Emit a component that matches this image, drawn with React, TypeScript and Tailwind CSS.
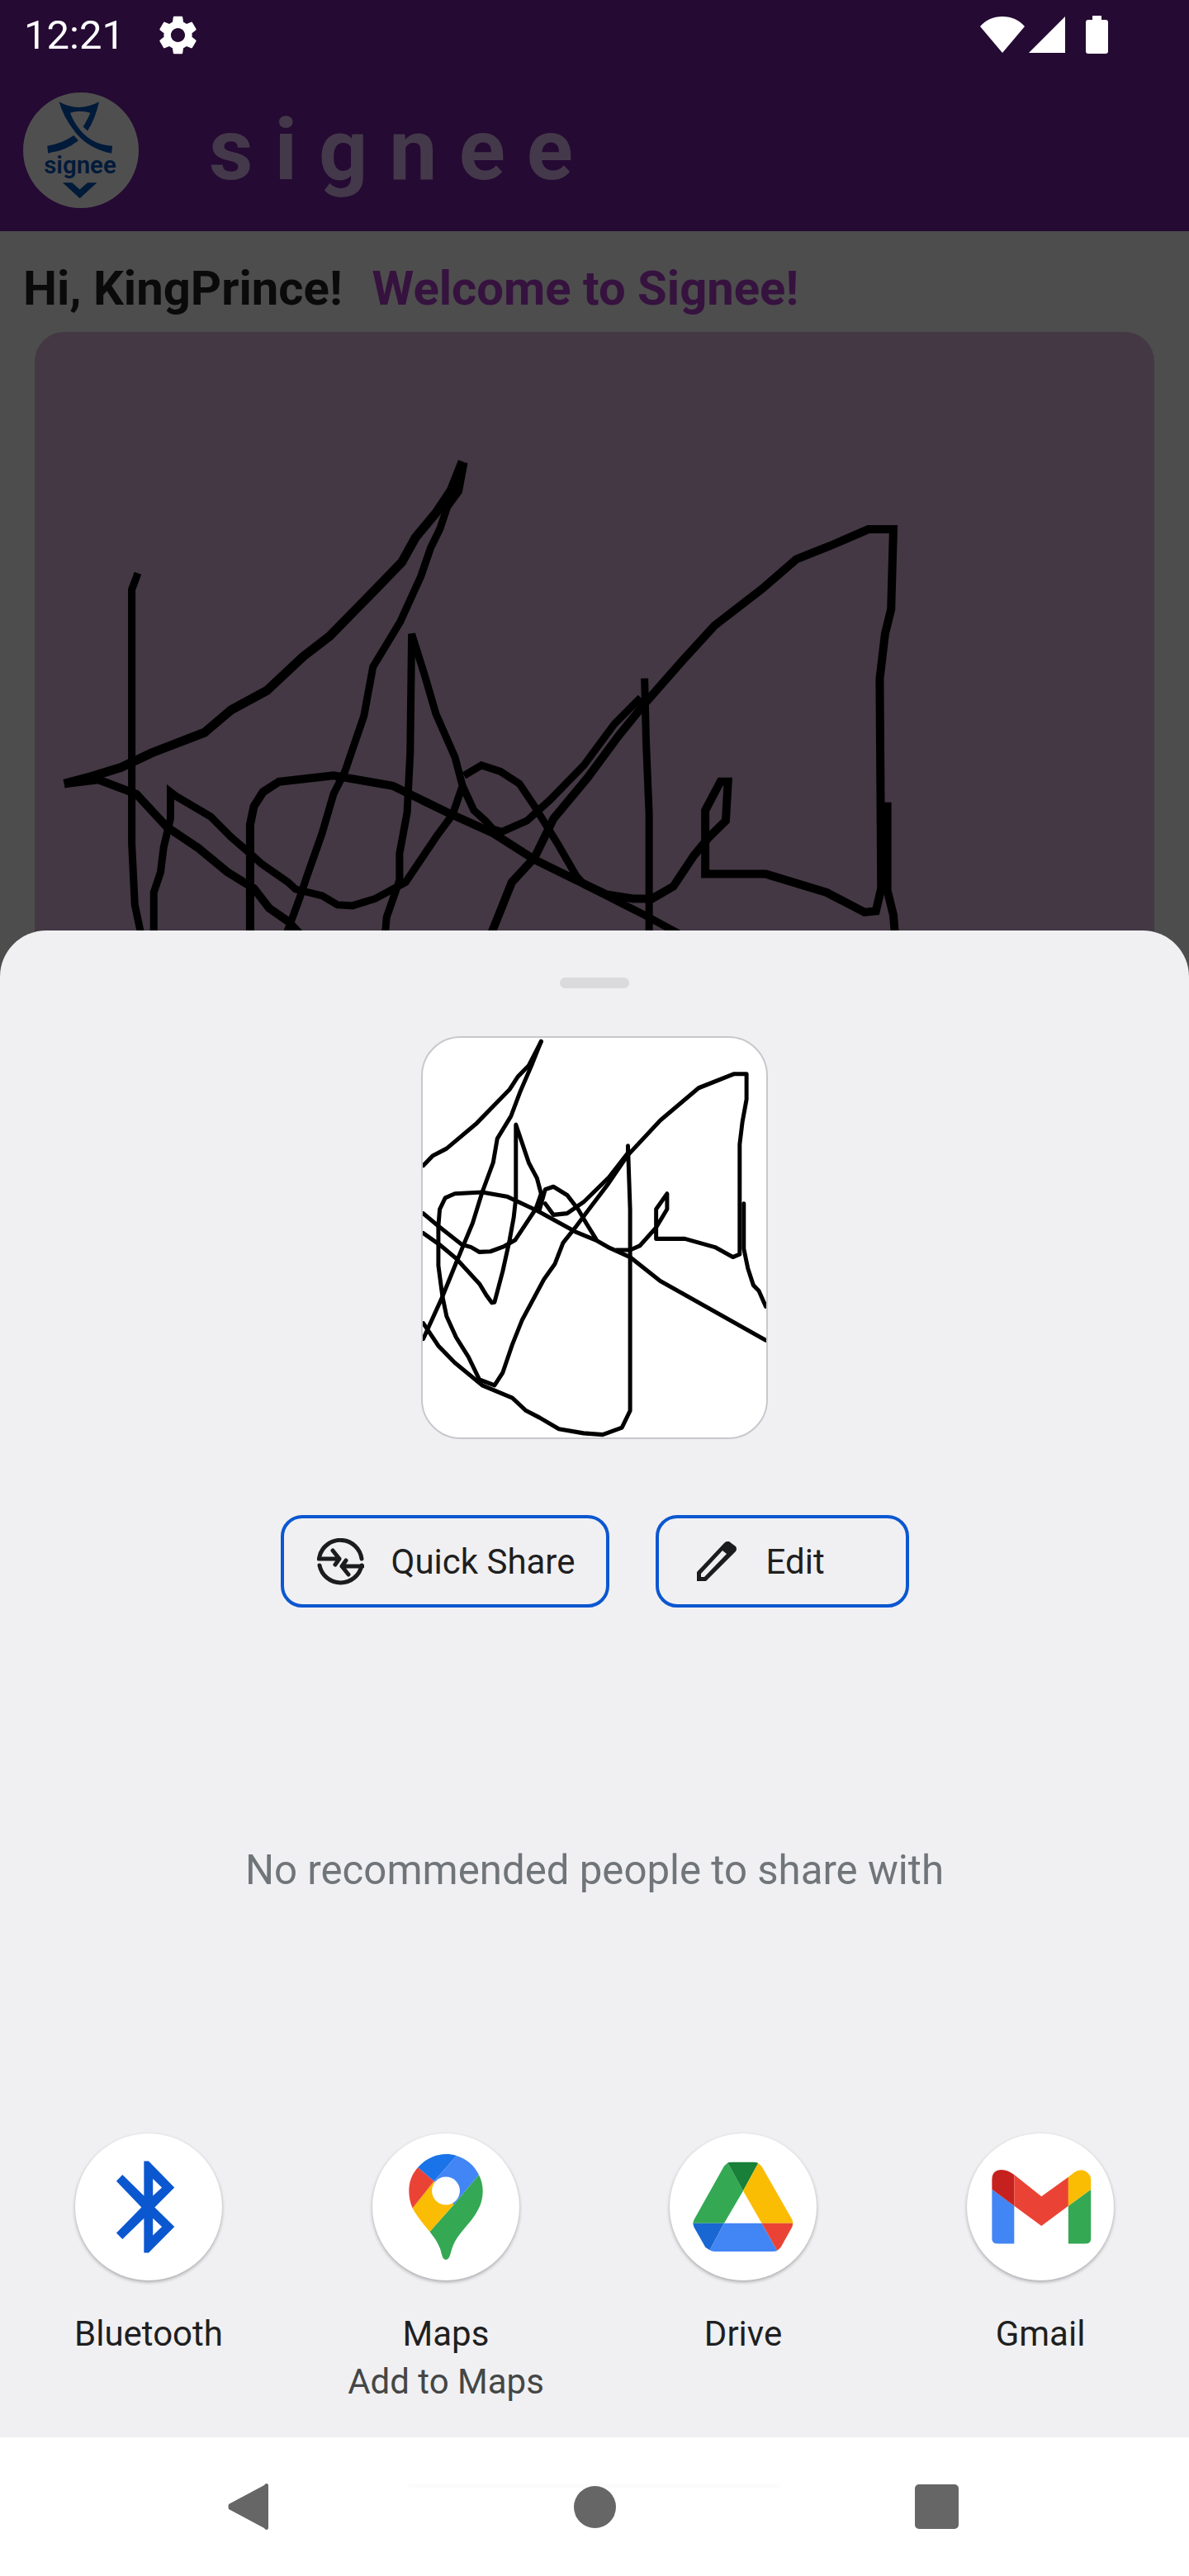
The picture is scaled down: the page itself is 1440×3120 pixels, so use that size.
import React from 'react';

const canvasStrokes = [
  { w: 9, d: 'M182 592 174 632V1250L178 1400 186 1470' },
  { w: 11, d: 'M85 1105 120 1088 160 1065 200 1030 270 980 305 925 352 878 400 795 435 745 495 632 530 565 548 505 575 445 595 390 610 320' },
  { w: 9, d: 'M612 322 605 392 590 430 580 485 568 530 555 600 528 710 492 820 480 940 455 1075 440 1130 425 1225 405 1330 395 1385 378 1470' },
  { w: 10, d: 'M85 1105 130 1095 180 1130 220 1210 262 1262 300 1320 335 1360 355 1408 380 1440 395 1470' },
  { w: 9, d: 'M203 1470V1370L212 1320 216 1260 225 1190V1125L232 1135 278 1185 305 1235 330 1275 345 1300 380 1345 390 1362 425 1378 445 1400 465 1402 495 1385 535 1345 575 1235 597 1180 610 1110 600 1040 575 935 560 840 543 740 541 1030 537 1175 527 1275V1340L510 1430 508 1470' },
  { w: 10, d: 'M330 1470V1205L335 1160 347 1125 368 1100 440 1085 518 1110 590 1175 650 1225 705 1290 760 1340 800 1375 835 1385H860L888 1355 915 1280 935 1235 957 1195 960 1100 950 1100 930 1170V1325H1010L1090 1370 1140 1418 1155 1415 1162 1360 1160 850 1167 740 1175 680 1178 485H1145L1095 525 1050 558 1005 630 942 720 900 805 850 910 815 990 775 1090 730 1190 705 1285 675 1345 648 1470' },
  { w: 9, d: 'M610 1110 625 1170 640 1195 650 1215 662 1222 695 1195 725 1145 770 1060 810 960 845 895' },
  { w: 9, d: 'M612 1085 635 1060 660 1075 685 1105 705 1160 735 1250 760 1330 770 1350 800 1378 850 1425 895 1470' },
  { w: 9, d: 'M850 848 852 1000 856 1180V1470' },
  { w: 10, d: 'M1170 1150V1365L1178 1425 1180 1470' },
];

const thumbStrokes = [
  'M95 525 130 490 180 465 290 375 410 255 440 210 480 170 525 85',
  'M525 85 490 170 450 260 415 350 365 430 350 515 310 620 275 730 215 870 165 990 95 1140',
  'M95 695 150 740 235 805 270 815 300 832 340 830 390 812 430 790 505 680 525 625 510 570 480 515 433 380V640L425 710 410 790 385 900 355 1010 345 1012 325 985 300 945 215 855 160 810 95 765',
  'M95 1085 150 1165 210 1225 310 1305 420 1350 470 1395 520 1420 590 1460 680 1475 750 1480 820 1455 850 1395V680L842 455V490',
  'M150 740 155 680 175 640 210 625 310 620 400 635 510 685 650 760 725 790 770 815 850 850 960 935 1345 1145',
  'M150 740V880L165 990 180 1060 215 1135 260 1205 300 1285 355 1305 385 1260 420 1160 455 1075 535 930 575 875 605 800 650 745 700 680 770 590 840 490 960 365 1100 250 1230 200H1275V290L1260 370 1250 450V840L1225 850 1160 815 1050 785H945V680L985 625V680L945 745 885 810 850 825H800',
  'M520 680 540 610 570 600 620 630 660 680 690 730 725 785',
  'M540 660 570 700 620 695 680 655 770 570 842 480',
  'M1265 660V820L1280 890 1300 950 1320 970 1345 1025',
];

const BluetoothIcon = () => (
  <svg viewBox="118 72 410 533" preserveAspectRatio="none" className="w-full h-full">
    <path
      fillRule="evenodd"
      fill="#0b57d0"
      d="M310 172H323L395 268 340 340 395 410 323 505H310V380L250 455 233 433 303 340 233 245 250 222 310 298ZM335 237V298L360 268ZM335 380V442L360 410Z"
    />
  </svg>
);

const MapsIcon = () => (
  <svg viewBox="948 72 410 533" preserveAspectRatio="none" className="w-full h-full">
    <path fill="#34a853" d="M1245 222C1252 240 1256 260 1256 280 1256 320 1245 350 1225 385 1200 425 1180 450 1170 490 1165 510 1163 530 1153 530 1143 530 1142 510 1137 490 1130 465 1120 448 1108 428L1175 330Z" />
    <path fill="#fbbc04" d="M1060 343 1120 245 1175 330 1108 428C1090 400 1072 372 1060 343Z" />
    <path fill="#ea4335" d="M1075 195 1120 245 1060 343C1053 322 1050 300 1050 280 1050 248 1058 220 1075 195Z" />
    <path fill="#1a73e8" d="M1075 195C1095 165 1125 147 1153 147 1164 147 1174 149 1183 153L1120 245Z" />
    <path fill="#4285f4" d="M1183 153C1212 165 1233 190 1245 222L1175 330 1120 245Z" />
    <ellipse cx="1153" cy="280" rx="39" ry="51" fill="#fff" />
  </svg>
);

const DriveIcon = () => (
  <svg viewBox="118 72 410 533" preserveAspectRatio="none" className="w-full h-full">
    <path fill="#34a853" d="M280 178 270 190 186 385 183 398H270L323 280Z" />
    <path fill="#188038" d="M280 178Q284 176 292 176H352Q360 176 365 180L323 280Z" />
    <path fill="#fbbc04" d="M365 180 375 192 460 385 462 398H375L323 280Z" />
    <path fill="#1967d2" d="M183 398H270L230 495 218 485 186 412Z" />
    <path fill="#4285f4" d="M270 398H375L418 497Q414 500 405 500H243Q235 500 230 495Z" />
    <path fill="#ea4335" d="M375 398H462L460 410 428 485 418 497Z" />
  </svg>
);

const GmailIcon = () => (
  <svg viewBox="948 72 410 533" preserveAspectRatio="none" className="w-full h-full">
    <path fill="#4285f4" d="M1018 275 1080 335V472H1035Q1018 472 1018 455Z" />
    <path fill="#34a853" d="M1294 275 1231 335V472H1277Q1294 472 1294 455Z" />
    <path fill="#c5221f" d="M1018 275V240Q1018 204 1045 204 1062 204 1080 222V335Z" />
    <path fill="#ea4335" d="M1080 222 1156 300 1231 230V335L1156 407 1080 335Z" />
    <path fill="#fbbc04" d="M1231 230 1248 213Q1265 198 1280 210 1294 222 1294 240V275L1231 335Z" />
  </svg>
);

const targets = [
  { name: 'Bluetooth', sub: '', icon: <BluetoothIcon /> },
  { name: 'Maps', sub: 'Add to Maps', icon: <MapsIcon /> },
  { name: 'Drive', sub: '', icon: <DriveIcon /> },
  { name: 'Gmail', sub: '', icon: <GmailIcon /> },
];

const StatusBar = () => (
  <div className="h-[84px] flex items-center pl-[29px] pr-[98px] text-white">
    <span className="text-[49px] leading-none font-[Roboto,sans-serif]">12:21</span>
    <svg viewBox="0 0 24 24" className="w-[57px] h-[57px] ml-[36px] fill-white">
      <path d="M19.14,12.94c0.04-0.3,0.06-0.61,0.06-0.94c0-0.32-0.02-0.64-0.07-0.94l2.03-1.58c0.18-0.14,0.23-0.41,0.12-0.61 l-1.92-3.32c-0.12-0.22-0.37-0.29-0.59-0.22l-2.39,0.96c-0.5-0.38-1.03-0.7-1.62-0.94L14.4,2.81c-0.04-0.24-0.24-0.41-0.48-0.41 h-3.84c-0.24,0-0.43,0.17-0.47,0.41L9.25,5.35C8.66,5.59,8.12,5.92,7.63,6.29L5.24,5.33c-0.22-0.08-0.47,0-0.59,0.22L2.74,8.87 C2.62,9.08,2.66,9.34,2.86,9.48l2.03,1.58C4.84,11.36,4.8,11.69,4.8,12s0.02,0.64,0.07,0.94l-2.03,1.58 c-0.18,0.14-0.23,0.41-0.12,0.61l1.92,3.32c0.12,0.22,0.37,0.29,0.59,0.22l2.39-0.96c0.5,0.38,1.03,0.7,1.62,0.94l0.36,2.54 c0.05,0.24,0.24,0.41,0.48,0.41h3.84c0.24,0,0.44-0.17,0.47-0.41l0.36-2.54c0.59-0.24,1.13-0.56,1.62-0.94l2.39,0.96 c0.22,0.08,0.47,0,0.59-0.22l1.92-3.32c0.12-0.22,0.07-0.47-0.12-0.61L19.14,12.94z M12,15.6c-1.98,0-3.6-1.62-3.6-3.6 s1.62-3.6,3.6-3.6s3.6,1.62,3.6,3.6S13.98,15.6,12,15.6z" />
    </svg>
    <div className="ml-auto flex items-center">
      <svg viewBox="0 0 54 44" className="w-[54px] h-[44px] fill-white">
        <path d="M27 44 0 12C7 4 16 0 27 0S47 4 54 12Z" />
      </svg>
      <svg viewBox="0 0 44 44" className="w-[44px] h-[44px] ml-[5px] fill-white">
        <path d="M44 0V44H0Z" />
      </svg>
      <svg viewBox="0 0 27 46" className="w-[27px] h-[46px] ml-[25px] fill-white">
        <path d="M8 0H19V5H24Q27 5 27 8V43Q27 46 24 46H3Q0 46 0 43V8Q0 5 3 5H8Z" />
      </svg>
    </div>
  </div>
);

const Logo = () => (
  <div className="w-[140px] h-[140px] rounded-full bg-[#4f4f4f] shrink-0">
    <svg viewBox="85 66 418 419" className="w-full h-full fill-[#001a3a]">
      <path d="M215 100Q285 140 360 100 345 165 318 205L302 190Q320 160 328 140 290 128 255 140 285 215 345 245 375 258 408 260L405 287 385 282Q310 260 270 205 230 155 215 100Z" />
      <path d="M172 260Q230 250 268 222L285 240Q240 275 190 282L175 287Z" />
      <path d="M228 393H262L290 418 318 393H352L290 450Z" />
      <text x="291" y="359" textAnchor="middle" fontSize="88" fontWeight="600" fontFamily="Roboto, sans-serif">signee</text>
    </svg>
  </div>
);

const App = () => {
  return (
    <div className="relative w-[1440px] h-[3120px] overflow-hidden flex flex-col bg-[#4d4d4d] font-[Roboto,sans-serif]">
      <header className="h-[280px] bg-[#250a33] shrink-0">
        <StatusBar />
        <div className="flex items-center pl-[28px] mt-[28px]">
          <Logo />
          <span className="ml-[85px] text-[104px] leading-none font-bold tracking-[26px] text-[#44394a]">signee</span>
        </div>
      </header>

      <main className="flex-1 min-h-0 px-[42px]">
        <div className="-mx-[42px] pl-[28px] mt-[38px] h-[62px] flex items-center text-[58px] leading-none font-bold whitespace-nowrap">
          <span className="text-[#0a0a0a]">Hi, KingPrince!</span>
          <span className="ml-[36px] text-[#36123f]">Welcome to Signee!</span>
        </div>
        <div className="relative mt-[22px] h-[1100px] bg-[#433843] rounded-[36px] overflow-hidden">
          <svg viewBox="46 4 1476 2213" preserveAspectRatio="none" className="absolute inset-0 w-full h-full fill-none stroke-black">
            {canvasStrokes.map((s, i) => (
              <path key={i} d={s.d} strokeWidth={s.w} vectorEffect="non-scaling-stroke" />
            ))}
          </svg>
        </div>
      </main>

      {/* share sheet sits over the app */}
      <section className="absolute left-0 right-0 top-[1127px] bottom-[168px] bg-[#f0f0f3] rounded-t-[56px] flex flex-col items-center">
        <div className="mt-[57px] w-[84px] h-[13px] rounded-full bg-[#dadadd]" />
        <div className="mt-[58px] w-[420px] h-[488px] rounded-[48px] border-2 border-[#c8c8cc] bg-white overflow-hidden shrink-0">
          <svg viewBox="93 72 1254 1418" preserveAspectRatio="none" className="w-full h-full fill-none stroke-black" strokeLinejoin="round" strokeLinecap="round">
            {thumbStrokes.map((d, i) => (
              <path key={i} d={d} strokeWidth={15} />
            ))}
          </svg>
        </div>

        <div className="mt-[92px] flex gap-[56px]">
          <button className="w-[398px] h-[112px] rounded-[26px] border-4 border-[#0b57d0] flex items-center pl-[40px] text-[42px] text-[#1f1f1f]">
            <svg viewBox="0 0 57 57" className="w-[57px] h-[57px] fill-none stroke-[#1b1c1e] mr-[33px]" strokeWidth="5" strokeLinecap="round" strokeLinejoin="round">
              <path d="M3 22A26 26 0 0 1 54 25" />
              <path d="M54 33A26 26 0 0 1 3 33" />
              <path d="M2 25H27M19 15 27 25 22 32" />
              <path d="M55 34H30M38 44 30 34 35 27" />
            </svg>
            Quick Share
          </button>
          <button className="w-[307px] h-[112px] rounded-[26px] border-4 border-[#0b57d0] flex items-center pl-[46px] text-[42px] text-[#1f1f1f]">
            <svg viewBox="0 0 48 48" className="w-[48px] h-[48px] fill-[#1b1c1e] mr-[36px]">
              <path fillRule="evenodd" d="M0 48V37L33 2Q36-1 39 0L47 6Q49 9 47 12L11 48ZM5 39V43H9L36 15 31 11Z" />
            </svg>
            Edit
          </button>
        </div>

        <p className="mt-[286px] text-[49.2px] leading-[64px] text-[#70757a]">No recommended people to share with</p>

        <div className="mt-[287px] w-full grid grid-cols-4">
          {targets.map((t) => (
            <div key={t.name} className="flex flex-col items-center">
              <div className="w-[178px] h-[178px] rounded-full bg-white shadow-[0_2px_4px_rgba(0,0,0,0.3)]">{t.icon}</div>
              <div className="mt-[36px] text-[42px] leading-[58px] text-[#1f1f1f]">{t.name}</div>
              {t.sub && <div className="text-[42px] leading-[58px] text-[#444746]">{t.sub}</div>}
            </div>
          ))}
        </div>
      </section>

      <nav className="relative h-[168px] shrink-0 bg-white flex items-center justify-center">
        <div className="absolute left-[495px] top-[56px] w-[450px] h-[6px] bg-[#fcfcfd]" />
        <svg viewBox="0 0 49 56" className="absolute left-[276px] top-[56px] w-[49px] h-[56px] fill-[#666666]">
          <path d="M47 0Q49 0 49 3V53Q49 56 47 56 45 56 44 54L1 31Q0 28 1 25L44 2Q45 0 47 0Z" />
        </svg>
        <div className="relative w-[51px] h-[51px] rounded-full bg-[#666666]" />
        <div className="absolute left-[1108px] top-[57px] w-[53px] h-[54px] rounded-[5px] bg-[#666666]" />
      </nav>
    </div>
  );
};

export default App;
